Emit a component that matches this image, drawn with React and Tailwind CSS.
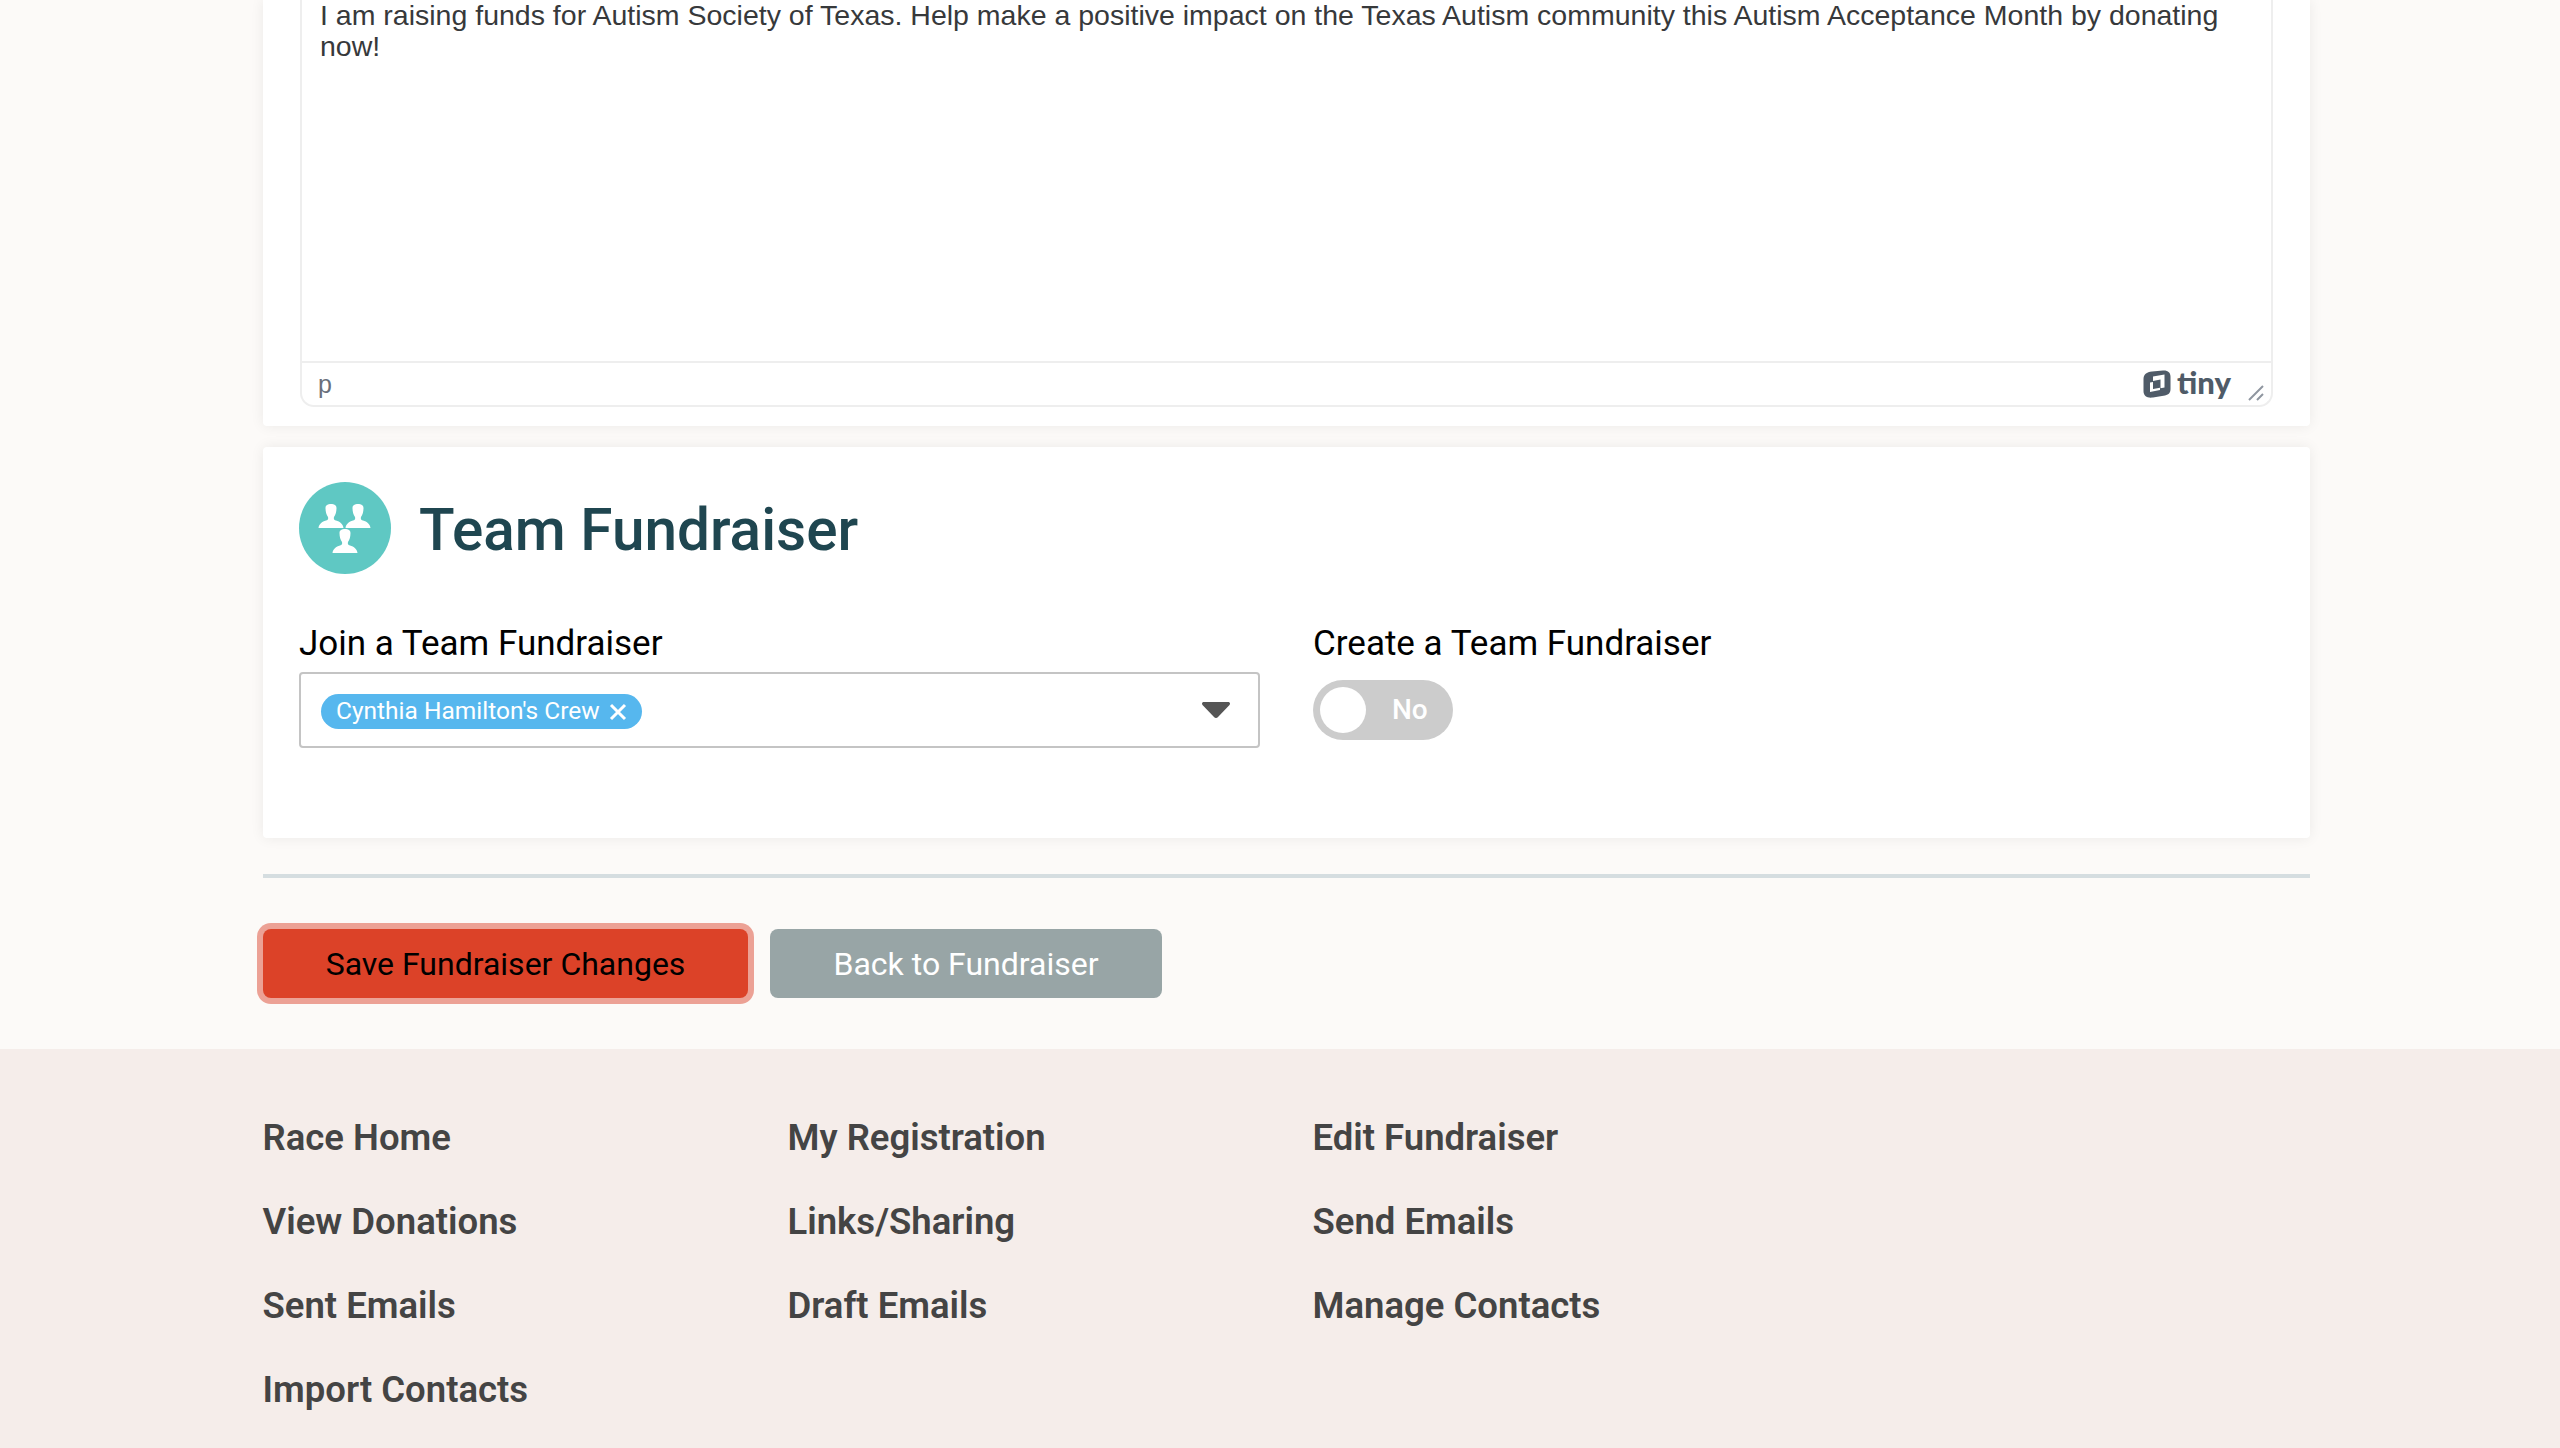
import React from "react";

const links = [
  "Race Home", "My Registration", "Edit Fundraiser",
  "View Donations", "Links/Sharing", "Send Emails",
  "Sent Emails", "Draft Emails", "Manage Contacts",
  "Import Contacts",
];

function TeamIcon() {
  const bust = "M-5.500 4C-5.500 1-3 0 0 0C3 0 5.500 1 5.500 4C5.500 8 4.500 11 3 13C2.500 15 3 16 5 16.500C9 17.500 12 20 12.500 24H-12.500C-12 20-9 17.500-5 16.500C-3 16-2.500 15-3 13C-4.500 11-5.500 8-5.500 4Z";
  return (
    <svg width="92" height="92" viewBox="0 0 92 92" className="shrink-0">
      <circle cx="46" cy="46" r="46" fill="#5fc8c3" />
      <g fill="#fff">
        <path d={bust} transform="translate(32 22)" />
        <path d={bust} transform="translate(59 22)" />
        <path d={bust} transform="translate(46 47)" />
      </g>
    </svg>
  );
}

function TinyLogo() {
  return (
    <svg width="28" height="28" viewBox="0 0 28 28" className="shrink-0">
      <path fill="#4f5b68" d="M9 1.500L20 .5C25 .2 27.500 2.500 27.500 7V19C27.500 22.500 26 24.500 22 25.500L10 27.500C4 28.300 .5 26 .5 21V9C.5 4.500 3.500 2 9 1.500Z" />
      <path fill="#fff" d="M10 6.500L21.500 4.500V17.500L17.500 18.300V9.500L10 11Z" />
      <path fill="#fff" d="M7 12.500L10 12V19L17 17.800V20L7 22Z" />
    </svg>
  );
}

export default function App() {
  return (
    <div className="h-[1448px] overflow-hidden bg-[#fcfaf8] font-['Roboto',sans-serif]">
      <div className="ml-[263px] w-[2047px]">
        <section className="h-[426px] rounded-b-[4px] bg-white px-[37px] shadow-[0_0_14px_rgba(0,0,0,0.07)]">
          <div className="flex h-[407px] flex-col rounded-b-[14px] border-x-2 border-b-2 border-[#eeeeee]">
            <div className="h-[361px] pl-[18px] pr-[19px] font-['Liberation_Sans',sans-serif] text-[28.5px] leading-[31px] text-[#37393b]">
              I am raising funds for Autism Society of Texas. Help make a positive impact on the Texas Autism community this Autism Acceptance Month by donating now!
            </div>
            <div className="relative flex flex-1 items-center justify-between border-t-2 border-[#eeeeee] pl-[16px] pr-[40px]">
              <span className="font-['Liberation_Sans',sans-serif] text-[25px] leading-none text-[#6a6f7b]">p</span>
              <span className="flex items-center gap-[6px]">
                <TinyLogo />
                <span className="-mt-[3px] font-['Lato',sans-serif] text-[31px] font-black leading-none text-[#4f5b68]">tiny</span>
              </span>
              <svg width="16" height="16" viewBox="0 0 16 16" className="absolute bottom-[4px] right-[7px]">
                <path d="M1 15 15 1M9 15l6-6" stroke="#8f96a0" strokeWidth="2" fill="none" />
              </svg>
            </div>
          </div>
        </section>

        <section className="mt-[21px] h-[391px] rounded-[4px] bg-white px-[36px] pt-[35px] shadow-[0_0_14px_rgba(0,0,0,0.07)]">
          <div className="flex items-center gap-[28px]">
            <TeamIcon />
            <h2 className="pt-[4px] text-[58.500px] font-medium leading-none text-[#1f4650]">Team Fundraiser</h2>
          </div>
          <div className="mt-[49px] flex gap-[53px]">
            <div className="w-[961px]">
              <label className="block text-[35px] leading-[42px] text-black">Join a Team Fundraiser</label>
              <div className="mt-[7px] flex h-[76px] items-center justify-between rounded-[4px] border-2 border-[#c4c4c4] pl-[20px] pr-[28px]">
                <span className="mt-[3px] flex h-[35px] w-[321px] items-center justify-between rounded-full bg-[#56b7ee] pl-[15px] pr-[15px] text-[24.500px] text-white">
                  Cynthia Hamilton's Crew
                  <svg width="18" height="18" viewBox="0 0 18 18">
                    <path d="M2 2 16 16M16 2 2 16" stroke="#fff" strokeWidth="3" />
                  </svg>
                </span>
                <svg width="28" height="16" viewBox="0 0 28 16">
                  <path d="M2 0h24c2 0 2.500 1.500 1.500 3L16 15c-1 1.300-3 1.300-4 0L.5 3C-.5 1.500 0 0 2 0z" fill="#555555" />
                </svg>
              </div>
            </div>
            <div>
              <label className="block text-[35px] leading-[42px] text-black">Create a Team Fundraiser</label>
              <div className="mt-[15px] flex h-[60px] w-[140px] items-center rounded-full bg-[#cccccc] pl-[7px]">
                <span className="h-[46px] w-[46px] rounded-full bg-white"></span>
                <span className="ml-[26px] text-[28px] font-medium text-white">No</span>
              </div>
            </div>
          </div>
        </section>

        <hr className="mt-[36px] border-0 border-t-[4px] border-[#d5dde0]" />

        <div className="mt-[51px] flex gap-[22px]">
          <button className="h-[69px] w-[485px] rounded-[8px] bg-[#dc4228] text-[32px] text-black ring-[6px] ring-[#eca195]">
            Save Fundraiser Changes
          </button>
          <button className="h-[69px] w-[392px] rounded-[8px] bg-[#98a5a6] text-[32px] text-white">
            Back to Fundraiser
          </button>
        </div>
      </div>

      <footer className="mt-[51px] h-[399px] bg-[#f5edea] pl-[262.500px] pt-[47px]">
        <div className="grid w-[1575px] grid-cols-3">
          {links.map((l) => (
            <a key={l} className="block h-[84px] text-[36.500px] font-semibold leading-[84px] text-[#444444]">{l}</a>
          ))}
        </div>
      </footer>
    </div>
  );
}
